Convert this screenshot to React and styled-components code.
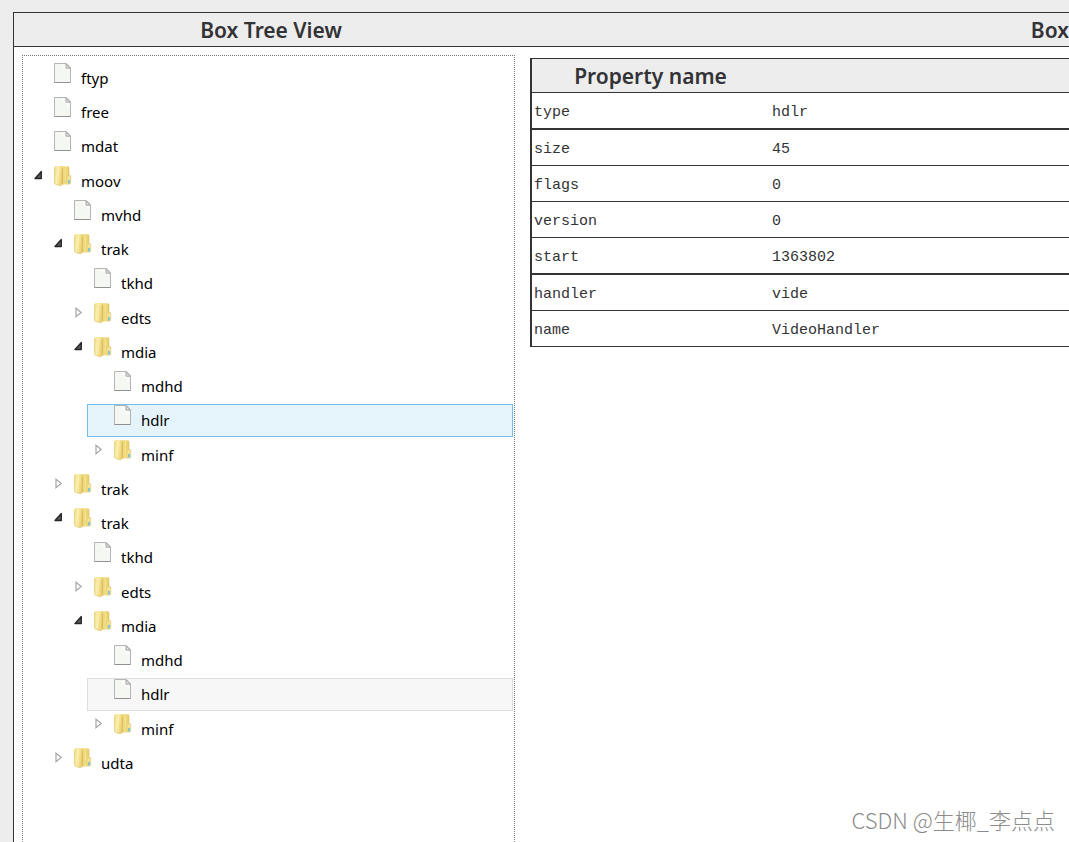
import { useState } from 'react';
import styled, { createGlobalStyle } from 'styled-components';

const GlobalStyle = createGlobalStyle`
  * {
    box-sizing: border-box;
  }
  body {
    margin: 0;
    background: #ededed;
    color: #333336;
  }
  button {
    border: 0;
    padding: 0;
    background: none;
    color: inherit;
    font: inherit;
    cursor: pointer;
  }
`;

const Page = styled.div`
  display: flex;
  height: 100vh;
  padding: 12px 0 0 13px;
  overflow: hidden;
`;

const Frame = styled.main`
  flex: 1;
  display: grid;
  grid-template-columns: 514px minmax(0, 1fr);
  grid-template-rows: 35px minmax(0, 1fr);
  border-top: 1px solid #333336;
  border-left: 1px solid #333336;
  background: #fff;
`;

const Title = styled.h2`
  margin: 0;
  border-bottom: 1px solid #333336;
  padding-top: 1px;
  height: 34px;
  background: #ededed;
  font: 600 21px/33px 'Noto Sans', sans-serif;
  text-align: ${(props) => props.$align || 'center'};
`;

const TreePanel = styled.section`
  margin: 7px 13px 0 8px;
  border: 1px dotted #777;
  border-bottom: 0;
  padding: 6px 1px 0 4px;
`;

const Tree = styled.ul`
  margin: 0;
  padding: 0;
  list-style: none;
  color: #000;
  font: 15px/31px 'Noto Sans', sans-serif;
`;

const state = {
  selected: 'border-color: #70c0e7; background: #e5f3fb;',
  hovered: 'border-color: #dedede; background: #f7f7f7;',
};

const Row = styled.li`
  display: flex;
  height: 33px;
  margin: 0 0 1px ${(props) => props.$depth * 20}px;
  border: 1px solid transparent;
  ${(props) => state[props.$state]}

  &:nth-child(4n + 3) {
    margin-bottom: 2px;
  }
`;

const Toggle = styled.button`
  display: flex;
  width: 26px;
  padding: 4px 0 0 6px;
`;

const Spacer = styled.span`
  width: 26px;
`;

const Node = styled.button`
  flex: 1;
  display: flex;
  gap: 9px;
  text-align: left;
`;

const PropertyPanel = styled.section`
  padding: 10px 0 0 2px;
`;

const Table = styled.table`
  width: 100%;
  table-layout: fixed;
  border-top: 1px solid #333336;
  border-left: 2px solid #333336;
  border-spacing: 0;

  col:first-child {
    width: 237px;
  }
  th {
    height: 34px;
    padding: 1px 0 0;
    border-bottom: 1px solid #333336;
    background: #ededed;
    font: 600 21px/32px 'Noto Sans', sans-serif;
  }
  td {
    padding: 4px 2px 0;
    border-bottom: 1px solid #333336;
    font: 15px/31px 'Liberation Mono', monospace;
  }
  td + td {
    padding-left: 3px;
  }
  tbody tr:nth-child(4n + 1) td {
    border-bottom-width: 2px;
  }
`;

const Watermark = styled.div`
  position: absolute;
  right: 14px;
  bottom: 7px;
  color: #8c8c8c;
  font: 300 22px/32px 'Noto Sans CJK SC', sans-serif;
`;

const FileIcon = () => (
  <svg width="18" height="21" viewBox="0 0 18 21" aria-hidden="true">
    <path d="M.5.5h11.8l4.2 4.2v14.8H.5z" fill="#f5f7f3" stroke="#b5b5b5" />
    <path d="M2 2h9v4h4v4L7 2z" fill="#fdfdfc" />
    <path d="M12 .8v4.4h4.4z" fill="#dedede" stroke="#a8a8a8" />
    <path d="M.5 19.5h16" stroke="#919191" />
  </svg>
);

const FolderIcon = () => (
  <svg width="18" height="21" viewBox="0 0 18 21" aria-hidden="true">
    <defs>
      <linearGradient id="flap" x2="1" y2=".3">
        <stop offset="0" stopColor="#f0da7c" />
        <stop offset=".45" stopColor="#fbf0b2" />
        <stop offset="1" stopColor="#ecd274" />
      </linearGradient>
      <linearGradient id="back">
        <stop offset="0" stopColor="#e8ca66" />
        <stop offset=".6" stopColor="#f3df88" />
        <stop offset="1" stopColor="#e2c45a" />
      </linearGradient>
    </defs>
    <path d="M6 .3h7.5q1.800 0 1.800 1.800v16l-7 .6z" fill="url(#back)" />
    <path d="M.5 1.500Q.5 0 2 0h4.500q1.700.4 1.700 2v16.500l-1.400 1.300q-3-.6-5.500-1.600-.8-.4-.8-1z" fill="url(#flap)" />
    <path d="M.6 1.500v15.700q0 .7.8 1 2.500 1 5.400 1.600l1.400-1.300" fill="none" stroke="#e0c76c" strokeWidth=".7" />
    <path d="M8.300 2.300v16" stroke="#cfae4c" strokeWidth=".7" />
    <path d="M13 10.200q0-.7.7-.7h2.400q.7 0 .7.7v7l-1 .9H13z" fill="#f4e294" stroke="#d9c06b" strokeWidth=".5" />
    <path d="M14 14h2v3.500h-2z" fill="#86c5ca" />
  </svg>
);

const OpenArrow = () => (
  <svg width="10" height="12" viewBox="0 0 10 12" aria-hidden="true">
    <path d="M7.3 1.5v7H1z" fill="#595959" stroke="#262626" strokeWidth="1.3" strokeLinejoin="round" />
  </svg>
);

const ClosedArrow = () => (
  <svg width="10" height="12" viewBox="0 0 10 12" aria-hidden="true">
    <path d="M2 1.2v8.6l5.2-4.3z" fill="#fff" stroke="#a6a6a6" strokeWidth="1.2" />
  </svg>
);

const nodes = [
  { name: 'ftyp', depth: 0 },
  { name: 'free', depth: 0 },
  { name: 'mdat', depth: 0 },
  { name: 'moov', depth: 0, folder: true, open: true },
  { name: 'mvhd', depth: 1 },
  { name: 'trak', depth: 1, folder: true, open: true },
  { name: 'tkhd', depth: 2 },
  { name: 'edts', depth: 2, folder: true },
  { name: 'mdia', depth: 2, folder: true, open: true },
  { name: 'mdhd', depth: 3 },
  { name: 'hdlr', depth: 3 },
  { name: 'minf', depth: 3, folder: true },
  { name: 'trak', depth: 1, folder: true },
  { name: 'trak', depth: 1, folder: true, open: true },
  { name: 'tkhd', depth: 2 },
  { name: 'edts', depth: 2, folder: true },
  { name: 'mdia', depth: 2, folder: true, open: true },
  { name: 'mdhd', depth: 3 },
  { name: 'hdlr', depth: 3 },
  { name: 'minf', depth: 3, folder: true },
  { name: 'udta', depth: 1, folder: true },
];

const properties = [
  ['type', 'hdlr'],
  ['size', '45'],
  ['flags', '0'],
  ['version', '0'],
  ['start', '1363802'],
  ['handler', 'vide'],
  ['name', 'VideoHandler'],
];

const BoxTree = () => {
  const [selected, setSelected] = useState(10);
  const [hovered, setHovered] = useState(18);

  const rowState = (index) => {
    if (index === selected) return 'selected';
    return index === hovered ? 'hovered' : undefined;
  };

  return (
    <Tree>
      {nodes.map((node, index) => (
        <Row
          key={index}
          $depth={node.depth}
          $state={rowState(index)}
          onMouseEnter={() => setHovered(index)}
        >
          {node.folder ? (
            <Toggle type="button" aria-label={`Toggle ${node.name}`} aria-expanded={!!node.open}>
              {node.open ? <OpenArrow /> : <ClosedArrow />}
            </Toggle>
          ) : (
            <Spacer />
          )}
          <Node type="button" onClick={() => setSelected(index)}>
            {node.folder ? <FolderIcon /> : <FileIcon />}
            <span>{node.name}</span>
          </Node>
        </Row>
      ))}
    </Tree>
  );
};

const App = () => (
  <>
    <GlobalStyle />
    <Page>
      <Frame>
        <Title>Box Tree View</Title>
        <Title $align="right">Box</Title>
        <TreePanel>
          <BoxTree />
        </TreePanel>
        <PropertyPanel>
          <Table>
            <colgroup>
              <col />
              <col />
            </colgroup>
            <thead>
              <tr>
                <th scope="col">Property name</th>
                <th aria-label="Property value" />
              </tr>
            </thead>
            <tbody>
              {properties.map(([name, value]) => (
                <tr key={name}>
                  <td>{name}</td>
                  <td>{value}</td>
                </tr>
              ))}
            </tbody>
          </Table>
        </PropertyPanel>
      </Frame>
    </Page>
    <Watermark>CSDN @生椰_李点点</Watermark>
  </>
);

export default App;
